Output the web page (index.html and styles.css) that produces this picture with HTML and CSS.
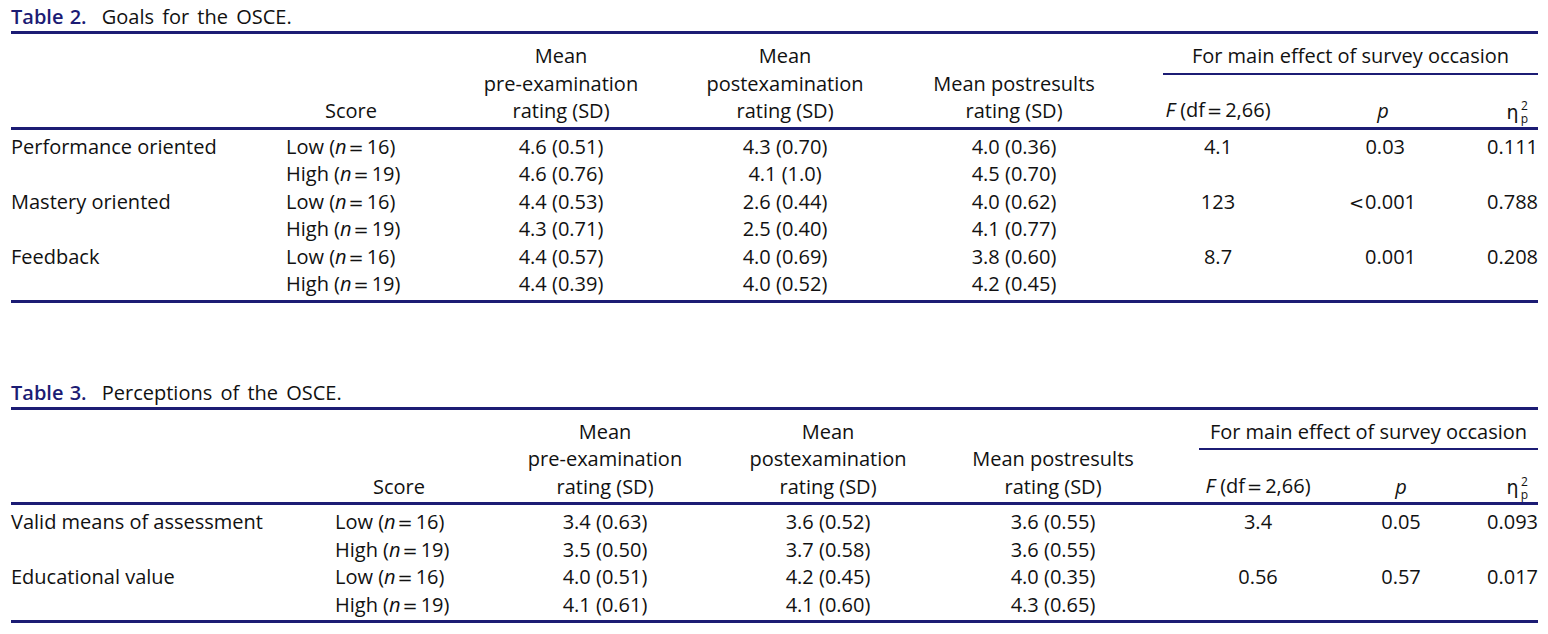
FILE: index.html
```html
<!DOCTYPE html>
<html>
<head>
<meta charset="utf-8">
<link rel="stylesheet" href="styles.css">
</head>
<body>
<section class="block t2">
  <div class="title"><span class="tnum">Table 2.</span> Goals for the OSCE.</div>
  <div class="thead">
    <div class="h score">Score</div>
    <div class="h c3 mean">Mean<br>pre-examination<br>rating (SD)</div>
    <div class="h c4 mean">Mean<br>postexamination<br>rating (SD)</div>
    <div class="h c5 mean">Mean postresults<br>rating (SD)</div>
    <div class="group">For main effect of survey occasion</div>
    <div class="h c6 sub"><i>F</i> (df<span class="eq">=</span>2,66)</div>
    <div class="h c7 sub"><i>p</i></div>
    <div class="h c8 sub eta"><span class="eta-g">η</span><span class="ss"><span class="s-up">2</span><span class="s-dn">p</span></span></div>
  </div>
  <div class="tbody">
    <div class="lab">Performance oriented</div><div class="grp">Low (<i>n</i><span class="eq">=</span>16)</div><div class="num">4.6 (0.51)</div><div class="num">4.3 (0.70)</div><div class="num">4.0 (0.36)</div><div class="num">4.1</div><div class="pv short">0.03</div><div class="eta-v">0.111</div>
    <div class="lab"></div><div class="grp">High (<i>n</i><span class="eq">=</span>19)</div><div class="num">4.6 (0.76)</div><div class="num">4.1 (1.0)</div><div class="num">4.5 (0.70)</div><div class="num"></div><div class="pv"></div><div class="eta-v"></div>
    <div class="lab">Mastery oriented</div><div class="grp">Low (<i>n</i><span class="eq">=</span>16)</div><div class="num">4.4 (0.53)</div><div class="num">2.6 (0.44)</div><div class="num">4.0 (0.62)</div><div class="num">123</div><div class="pv"><span class="lt">&lt;</span>0.001</div><div class="eta-v">0.788</div>
    <div class="lab"></div><div class="grp">High (<i>n</i><span class="eq">=</span>19)</div><div class="num">4.3 (0.71)</div><div class="num">2.5 (0.40)</div><div class="num">4.1 (0.77)</div><div class="num"></div><div class="pv"></div><div class="eta-v"></div>
    <div class="lab">Feedback</div><div class="grp">Low (<i>n</i><span class="eq">=</span>16)</div><div class="num">4.4 (0.57)</div><div class="num">4.0 (0.69)</div><div class="num">3.8 (0.60)</div><div class="num">8.7</div><div class="pv">0.001</div><div class="eta-v">0.208</div>
    <div class="lab"></div><div class="grp">High (<i>n</i><span class="eq">=</span>19)</div><div class="num">4.4 (0.39)</div><div class="num">4.0 (0.52)</div><div class="num">4.2 (0.45)</div><div class="num"></div><div class="pv"></div><div class="eta-v"></div>
  </div>
</section>

<section class="block t3">
  <div class="title"><span class="tnum">Table 3.</span> Perceptions of the OSCE.</div>
  <div class="thead">
    <div class="h score">Score</div>
    <div class="h c3 mean">Mean<br>pre-examination<br>rating (SD)</div>
    <div class="h c4 mean">Mean<br>postexamination<br>rating (SD)</div>
    <div class="h c5 mean">Mean postresults<br>rating (SD)</div>
    <div class="group">For main effect of survey occasion</div>
    <div class="h c6 sub"><i>F</i> (df<span class="eq">=</span>2,66)</div>
    <div class="h c7 sub"><i>p</i></div>
    <div class="h c8 sub eta"><span class="eta-g">η</span><span class="ss"><span class="s-up">2</span><span class="s-dn">p</span></span></div>
  </div>
  <div class="tbody">
    <div class="lab">Valid means of assessment</div><div class="grp">Low (<i>n</i><span class="eq">=</span>16)</div><div class="num">3.4 (0.63)</div><div class="num">3.6 (0.52)</div><div class="num">3.6 (0.55)</div><div class="num">3.4</div><div class="pv">0.05</div><div class="eta-v">0.093</div>
    <div class="lab"></div><div class="grp">High (<i>n</i><span class="eq">=</span>19)</div><div class="num">3.5 (0.50)</div><div class="num">3.7 (0.58)</div><div class="num">3.6 (0.55)</div><div class="num"></div><div class="pv"></div><div class="eta-v"></div>
    <div class="lab">Educational value</div><div class="grp">Low (<i>n</i><span class="eq">=</span>16)</div><div class="num">4.0 (0.51)</div><div class="num">4.2 (0.45)</div><div class="num">4.0 (0.35)</div><div class="num">0.56</div><div class="pv">0.57</div><div class="eta-v">0.017</div>
    <div class="lab"></div><div class="grp">High (<i>n</i><span class="eq">=</span>19)</div><div class="num">4.1 (0.61)</div><div class="num">4.1 (0.60)</div><div class="num">4.3 (0.65)</div><div class="num"></div><div class="pv"></div><div class="eta-v"></div>
  </div>
</section>
</body>
</html>
```

FILE: styles.css
```css
html, body {
  margin: 0;
  padding: 0;
  background: #ffffff;
}
body {
  padding: 3px 10px 0 11px;
  font-family: "Open Sans", "DejaVu Sans", sans-serif;
  font-size: 20px;
  color: #111111;
  width: 1527px;
}
.block {
  --navy: #1c1c74;
}
.t2 {
  --cols: 275px 150px 250px 198px 260px 148px 182px 64px;
  --score-pad: 20px;
  margin-bottom: 76px;
}
.t3 {
  --cols: 324px 145px 250px 196px 254px 156px 130px 72px;
  --score-pad: 17px;
}
.title {
  height: 28px;
  line-height: 28px;
  margin-bottom: 3px;
  border-bottom: 3px solid var(--navy);
  word-spacing: 3px;
  box-sizing: content-box;
}
.tnum {
  color: var(--navy);
  font-weight: 600;
  margin-right: 7px;
  word-spacing: 1px;
}
.thead, .tbody {
  display: grid;
  grid-template-columns: var(--cols);
  line-height: 27.5px;
}
.thead {
  grid-template-rows: 32.5px 50px;
  padding: 5px 0 2px 0;
  border-bottom: 3px solid var(--navy);
}
.tbody {
  grid-auto-rows: 27.5px;
  padding: 3px 0 2px 0;
  border-bottom: 3px solid var(--navy);
}
.h {
  align-self: end;
  text-align: center;
  white-space: nowrap;
}
.score {
  grid-column: 2;
  grid-row: 1 / span 2;
  padding-right: var(--score-pad);
}
.c3 { grid-column: 3; }
.c4 { grid-column: 4; }
.c5 { grid-column: 5; }
.c6 { grid-column: 6; }
.c7 { grid-column: 7; }
.c8 { grid-column: 8; }
.mean { grid-row: 1 / span 2; }
.sub { grid-row: 2; }
.group {
  grid-column: 6 / span 3;
  grid-row: 1;
  margin-left: 19px;
  text-align: center;
  white-space: nowrap;
  border-bottom: 2px solid var(--navy);
  height: 27.5px;
  padding-bottom: 3px;
}
.eq {
  font-family: "DejaVu Sans", sans-serif;
  font-size: 18px;
  margin: 0 3px 0 2px;
}
.lt {
  font-family: "DejaVu Sans", sans-serif;
  font-size: 18px;
  margin-right: 1px;
}
.eta {
  display: flex;
  justify-content: flex-end;
  align-items: center;
  height: 27.5px;
  padding-right: 10px;
}
.eta-g {
  font-family: "DejaVu Sans", sans-serif;
  font-size: 19px;
  line-height: 20px;
  margin-top: 2px;
}
.ss {
  display: flex;
  flex-direction: column;
  font-size: 12px;
  line-height: 13px;
  margin-left: 2px;
  margin-top: 3px;
}
.lab, .grp {
  white-space: nowrap;
}
.num {
  text-align: center;
  white-space: nowrap;
}
.pv {
  text-align: right;
  padding-right: 58px;
  white-space: nowrap;
}
.t3 .pv {
  text-align: center;
  padding-right: 0;
}
.pv.short {
  padding-right: 69px;
}
.eta-v {
  text-align: right;
}
```
